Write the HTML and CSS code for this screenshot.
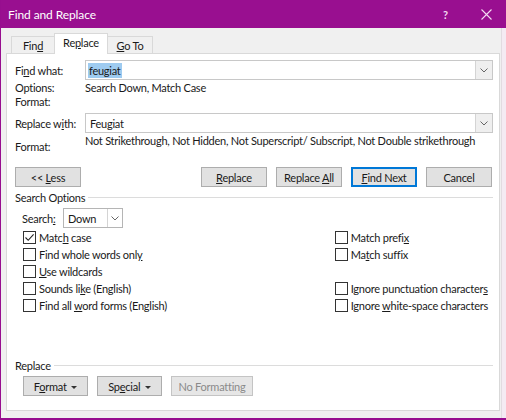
FILE: index.html
```html
<!DOCTYPE html>
<html>
<head>
<meta charset="utf-8">
<link rel="stylesheet" href="styles.css">
</head>
<body>
<div class="window">
  <div class="titlebar">
    <span class="title">Find and Replace</span>
    <span class="tb-help">?</span>
    <span class="tb-close">
      <svg width="11" height="11" viewBox="0 0 11 11"><path d="M0.5 0.5 L10.5 10.5 M10.5 0.5 L0.5 10.5" stroke="#f4d9f2" stroke-width="1.1" fill="none"/></svg>
    </span>
  </div>
  <div class="client">
    <div class="tabs">
      <div class="tab t-find"><span>Fin<u>d</u></span></div>
      <div class="tab active"><span>Re<u>p</u>lace</span></div>
      <div class="tab t-go"><span><u>G</u>o To</span></div>
    </div>
    <div class="panel">
      <div class="row find-row">
        <span class="label">Fi<u>n</u>d what:</span>
        <div class="combo"><span class="sel">feugiat</span><span class="arrow"><svg width="8" height="5" viewBox="0 0 8 5"><path d="M0.5 0.5 L4 4 L7.5 0.5" stroke="#666" fill="none"/></svg></span></div>
      </div>
      <div class="row info-row opt">
        <span class="label">Options:</span>
        <span class="value">Search Down, Match Case</span>
      </div>
      <div class="row info-row fmt1">
        <span class="label">Format:</span>
      </div>
      <div class="row find-row repl">
        <span class="label">Replace w<u>i</u>th:</span>
        <div class="combo"><span class="plain">Feugiat</span><span class="arrow"><svg width="8" height="5" viewBox="0 0 8 5"><path d="M0.5 0.5 L4 4 L7.5 0.5" stroke="#666" fill="none"/></svg></span></div>
      </div>
      <div class="row fmt2">
        <span class="label lab-low">Format:</span>
        <span class="value">Not Strikethrough, Not Hidden, Not Superscript/ Subscript, Not Double strikethrough</span>
      </div>
      <div class="btn-row">
        <button class="btn">&lt;&lt; <u>L</u>ess</button>
        <div class="spacer"></div>
        <button class="btn"><u>R</u>eplace</button>
        <button class="btn">Replace <u>A</u>ll</button>
        <button class="btn default"><u>F</u>ind Next</button>
        <button class="btn">Cancel</button>
      </div>
      <div class="group-title"><span>Search Options</span><span class="line"></span></div>
      <div class="search-row">
        <span class="label2">Search<u>:</u></span>
        <div class="select"><span>Down</span><span class="arrow"><svg width="8" height="5" viewBox="0 0 8 5"><path d="M0.5 0.5 L4 4 L7.5 0.5" stroke="#666" fill="none"/></svg></span></div>
      </div>
      <div class="checks">
        <div class="col">
          <div class="cb"><span class="box"><svg width="11" height="11" viewBox="0 0 11 11"><path d="M1.5 5.5 L4.2 8.3 L9.6 2.3" stroke="#222" stroke-width="1.1" fill="none"/></svg></span><span>Matc<u>h</u> case</span></div>
          <div class="cb"><span class="box"></span><span>Find whole words onl<u>y</u></span></div>
          <div class="cb"><span class="box"></span><span><u>U</u>se wildcards</span></div>
          <div class="cb"><span class="box"></span><span>Sounds li<u>k</u>e (English)</span></div>
          <div class="cb"><span class="box"></span><span>Find all <u>w</u>ord forms (English)</span></div>
        </div>
        <div class="col right">
          <div class="cb"><span class="box"></span><span>Match prefi<u>x</u></span></div>
          <div class="cb"><span class="box"></span><span>Ma<u>t</u>ch suffix</span></div>
          <div class="cb empty"></div>
          <div class="cb"><span class="box"></span><span>Ignore punctuation character<u>s</u></span></div>
          <div class="cb"><span class="box"></span><span>Ignore <u>w</u>hite-space characters</span></div>
        </div>
      </div>
      <div class="group-title replace-title"><span>Replace</span><span class="line"></span></div>
      <div class="bottom-row">
        <button class="btn small">F<u>o</u>rmat <span class="caret"></span></button>
        <button class="btn small">Sp<u>e</u>cial <span class="caret"></span></button>
        <button class="btn small disabled">No Formatting</button>
      </div>
    </div>
  </div>
</div>
</body>
</html>
```
FILE: styles.css
```css
* { box-sizing: border-box; }
html, body { margin: 0; padding: 0; }
body {
  width: 506px;
  height: 420px;
  overflow: hidden;
  background: #f4ebf3;
  font-family: Lato, "Noto Sans", sans-serif;
  font-size: 11px;
  letter-spacing: -0.25px;
  color: #1a1a1a;
}
u { text-decoration: underline; text-underline-offset: 1px; }
.window {
  width: 506px;
  height: 420px;
  border-left: 1px solid #970e8f;
  border-bottom: 2px solid #970e8f;
  display: flex;
  flex-direction: column;
}
.titlebar {
  height: 28px;
  background: #990f90;
  color: #fff;
  display: flex;
  align-items: center;
  padding-left: 7px;
  font-size: 12px;
  letter-spacing: -0.1px;
}
.title { flex: 1; }
.tb-help { color: #f4d9f2; font-size: 11px; width: 12px; margin-right: 26px; font-weight: bold; }
.tb-close { width: 11px; height: 11px; margin-right: 14px; display: flex; }
.client {
  flex: 1;
  width: 501px;
  background: #f0f0f0;
  border-right: 1px solid #e2dbe1;
  padding-left: 5px;
  display: flex;
  flex-direction: column;
}
.tabs {
  height: 25px;
  display: flex;
  align-items: flex-end;
  padding-left: 5px;
}
.tab {
  height: 17px;
  border: 1px solid #d9d9d9;
  border-bottom: none;
  background: #f0f0f0;
  display: flex;
  align-items: center;
  justify-content: center;
  white-space: nowrap;
}
.t-find { width: 43px; border-right: none; }
.t-go { width: 45px; border-left: none; }
.tab.active {
  height: 21px;
  width: 54px;
  background: #fff;
  position: relative;
  top: 1px;
  padding-bottom: 3px;
}
.panel {
  width: 494px;
  height: 358px;
  background: #fff;
  border: 1px solid #d9d9d9;
  padding: 6px 6px 0 8px;
}
.row { display: flex; align-items: center; }
.label { width: 70px; flex: none; white-space: nowrap; }
.find-row { height: 20px; }
.combo {
  flex: 1;
  height: 20px;
  border: 1px solid #c8c8c8;
  display: flex;
  align-items: center;
  padding-left: 2px;
}
.combo .sel { background: #9ecbf0; padding: 0 1px; line-height: 15px; margin-right: auto; }
.combo .plain { padding-left: 2px; flex: 1; }
.arrow {
  width: 17px;
  height: 18px;
  border-left: 1px solid #d4d4d4;
  background: #efefef;
  display: flex;
  align-items: center;
  justify-content: center;
}
.info-row { height: 14px; }
.repl { margin-top: 5px; }
.fmt2 { height: 22px; align-items: flex-start; margin-top: 1px; }
.fmt2 .value { white-space: nowrap; }
.lab-low { margin-top: 6px; }
.btn-row {
  display: flex;
  margin-top: 11px;
  gap: 9px;
  width: 477px;
}
.btn-row .spacer { flex: 1; }
.btn {
  font: inherit;
  letter-spacing: inherit;
  color: #1a1a1a;
  width: 66px;
  height: 20px;
  background: #e1e1e1;
  border: 1px solid #adadad;
  padding: 0;
  margin: 0;
  white-space: nowrap;
}
.btn.default { border: 1px solid #0078d7; box-shadow: inset 0 0 0 1px #0078d7; }
.group-title {
  display: flex;
  align-items: center;
  margin-top: 2px;
  height: 17px;
}
.group-title .line { flex: 1; height: 1px; background: #dcdcdc; margin-left: 3px; }
.search-row {
  display: flex;
  align-items: center;
  margin-top: 2px;
  padding-left: 7px;
  height: 20px;
}
.label2 { width: 41px; }
.select {
  width: 60px;
  height: 20px;
  border: 1px solid #b5b5b5;
  display: flex;
  align-items: center;
  padding-left: 4px;
}
.select span:first-child { flex: 1; }
.select .arrow { width: 15px; height: 18px; background: #fff; border-left: 1px solid #d4d4d4; }
.checks {
  display: flex;
  padding-left: 8px;
  margin-top: 1px;
}
.col { width: 315px; }
.col.right { width: 160px; }
.cb {
  display: flex;
  align-items: center;
  height: 17px;
  white-space: nowrap;
}
.box {
  width: 13px;
  height: 13px;
  border: 1px solid #333;
  background: #fff;
  margin-right: 3px;
  display: flex;
  align-items: center;
  justify-content: center;
  flex: none;
}
.replace-title { margin-top: 43px; }
.bottom-row {
  display: flex;
  gap: 9px;
  padding-left: 8px;
  margin-top: 2px;
}
.btn.small { width: 65px; height: 20px; }
.btn.disabled { width: 82px; color: #8a8a8a; background: #e6e6e6; border-color: #c4c4c4; }
.caret {
  display: inline-block;
  width: 0; height: 0;
  border-left: 3px solid transparent;
  border-right: 3px solid transparent;
  border-top: 3px solid #333;
  vertical-align: middle;
  margin-left: 2px;
}
```
